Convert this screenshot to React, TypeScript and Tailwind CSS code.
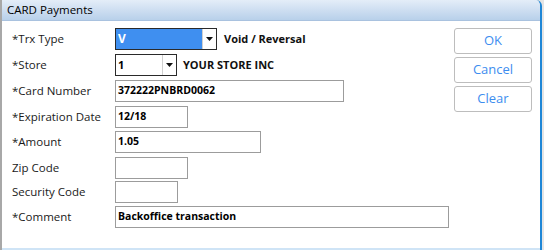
import React from "react";

const font = { fontFamily: '"Open Sans", "Noto Sans", sans-serif' };

type Row = { label: string; top: string; field: React.ReactNode };

const Input = ({ w, value }: { w: string; value?: string }) => (
  <div className={`${w} h-[22px] border border-[#9c9c9c] bg-white flex items-center pl-[2px] text-[10.5px] font-bold text-black`}>
    {value}
  </div>
);

const Arrow = () => (
  <div className="w-[14px] h-full bg-white flex items-center justify-center border-l border-[#d0d0d0]">
    <svg width="7" height="4" viewBox="0 0 7 4">
      <path d="M0 0h7L3.5 4z" fill="#111" />
    </svg>
  </div>
);

export default function App() {
  const rows: Row[] = [
    {
      label: "*Trx Type",
      top: "mt-[7px]",
      field: (
        <div className="flex items-center">
          <div className="w-[102px] h-[22px] border border-[#2a2a2a] flex">
            <div className="flex-1 bg-[#3f8ff0] text-white text-[12px] font-bold pl-[2px] flex items-center">V</div>
            <Arrow />
          </div>
          <span className="ml-[7px] text-[11px] font-bold text-[#111]">Void / Reversal</span>
        </div>
      ),
    },
    {
      label: "*Store",
      top: "mt-[4px]",
      field: (
        <div className="flex items-center">
          <div className="w-[62px] h-[22px] border border-[#2a2a2a] flex bg-white">
            <div className="flex-1 text-black text-[11px] font-bold pl-[2px] flex items-center">1</div>
            <Arrow />
          </div>
          <span className="ml-[6px] text-[11px] font-bold text-[#111]">YOUR STORE INC</span>
        </div>
      ),
    },
    { label: "*Card Number", top: "mt-[4px]", field: <Input w="w-[229px]" value="372222PNBRD0062" /> },
    { label: "*Expiration Date", top: "mt-[4px]", field: <Input w="w-[73px]" value="12/18" /> },
    { label: "*Amount", top: "mt-[3px]", field: <Input w="w-[146px]" value="1.05" /> },
    { label: "Zip Code", top: "mt-[4px]", field: <Input w="w-[73px]" /> },
    { label: "Security Code", top: "mt-[2px]", field: <Input w="w-[63px]" /> },
    { label: "*Comment", top: "mt-[3px]", field: <Input w="w-[334px]" value="Backoffice transaction" /> },
  ];

  return (
    <div className="w-[544px] h-[250px] bg-[#e4e4e4] flex overflow-hidden" style={font}>
      <div className="w-[542px] h-[250px] flex flex-col border-l-[2px] border-[#a8a8a8] border-r-[2px] border-r-[#1f86d6] rounded-tr-[6px] overflow-hidden">
        <div className="h-[21px] bg-gradient-to-b from-[#e4edf8] to-[#b8d0ea] border-b border-[#a9c2df] flex items-center pl-[5px] text-[11.5px] text-black">
          CARD Payments
        </div>
        <div className="flex-1 bg-white flex border-b-[2px] border-[#cfe4f6]">
          <div className="flex flex-col pl-[10px]">
            {rows.map((r) => (
              <div key={r.label} className={`flex items-center h-[22px] ${r.top}`}>
                <div className="w-[103px] text-[11.5px] text-[#1a1a1a]">{r.label}</div>
                {r.field}
              </div>
            ))}
          </div>
          <div className="ml-auto mr-[8px] mt-[7px] flex flex-col gap-[3px]">
            {["OK", "Cancel", "Clear"].map((b) => (
              <button
                key={b}
                className="w-[78px] h-[26px] border border-[#bdbdbd] rounded-[3px] bg-white text-[13px] text-[#3d8def] flex items-center justify-center"
              >
                {b}
              </button>
            ))}
          </div>
        </div>
      </div>
    </div>
  );
}
